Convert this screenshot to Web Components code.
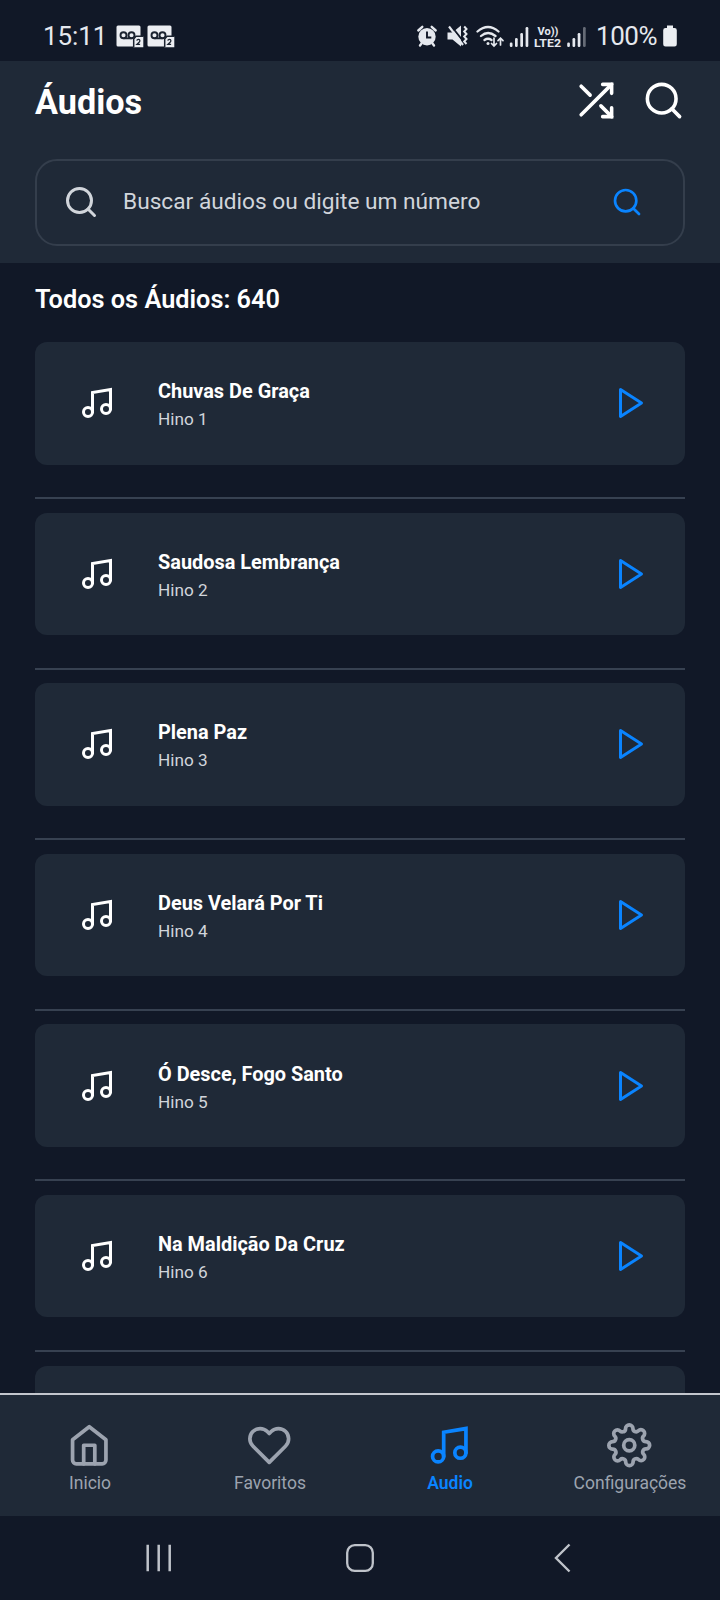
<!DOCTYPE html>
<html lang="pt-BR">
<head>
<meta charset="utf-8">
<title>Áudios</title>
<style>
html,body{margin:0;background:#111827}
body{font-family:Roboto,"Liberation Sans",sans-serif;width:720px;height:1600px;overflow:hidden}
</style>
</head>
<body>
<audio-app></audio-app>
<script>
const ICONS={
shuffle:'<polyline points="16 3 21 3 21 8"/><line x1="4" y1="20" x2="21" y2="3"/><polyline points="21 16 21 21 16 21"/><line x1="15" y1="15" x2="21" y2="21"/><line x1="4" y1="4" x2="9" y2="9"/>',
search:'<circle cx="11" cy="11" r="8"/><line x1="21" y1="21" x2="16.65" y2="16.65"/>',
music:'<path d="M9 18V5l12-2v13"/><circle cx="6" cy="18" r="3"/><circle cx="18" cy="16" r="3"/>',
play:'<polygon points="5 3 19 12 5 21 5 3" stroke-linejoin="round"/>',
home:'<path d="M3 9l9-7 9 7v11a2 2 0 0 1-2 2H5a2 2 0 0 1-2-2z"/><polyline points="9 22 9 12 15 12 15 22"/>',
heart:'<path d="M20.84 4.61a5.5 5.5 0 0 0-7.78 0L12 5.67l-1.06-1.06a5.5 5.5 0 0 0-7.78 7.78l1.06 1.06L12 21.23l7.78-7.78 1.06-1.06a5.5 5.5 0 0 0 0-7.78z"/>',
settings:'<circle cx="12" cy="12" r="3"/><path d="M19.4 15a1.65 1.65 0 0 0 .33 1.82l.06.06a2 2 0 0 1 0 2.83 2 2 0 0 1-2.83 0l-.06-.06a1.65 1.65 0 0 0-1.82-.33 1.65 1.65 0 0 0-1 1.51V21a2 2 0 0 1-2 2 2 2 0 0 1-2-2v-.09A1.65 1.65 0 0 0 9 19.4a1.65 1.65 0 0 0-1.82.33l-.06.06a2 2 0 0 1-2.83 0 2 2 0 0 1 0-2.83l.06-.06a1.65 1.65 0 0 0 .33-1.82 1.65 1.65 0 0 0-1.51-1H3a2 2 0 0 1-2-2 2 2 0 0 1 2-2h.09A1.65 1.65 0 0 0 4.6 9a1.65 1.65 0 0 0-.33-1.82l-.06-.06a2 2 0 0 1 0-2.83 2 2 0 0 1 2.83 0l.06.06a1.65 1.65 0 0 0 1.82.33H9a1.65 1.65 0 0 0 1-1.51V3a2 2 0 0 1 2-2 2 2 0 0 1 2 2v.09a1.65 1.65 0 0 0 1 1.51 1.65 1.65 0 0 0 1.82-.33l.06-.06a2 2 0 0 1 2.83 0 2 2 0 0 1 0 2.83l-.06.06a1.65 1.65 0 0 0-.33 1.82V9a1.65 1.65 0 0 0 1.51 1H21a2 2 0 0 1 2 2 2 2 0 0 1-2 2h-.09a1.65 1.65 0 0 0-1.51 1z"/>'
};
function define(name,html){
  customElements.define(name,class extends HTMLElement{
    constructor(){super();
      const t=document.createElement('template');
      t.innerHTML=html;
      this.attachShadow({mode:'open'}).append(t.content.cloneNode(true));
    }
  });
}
customElements.define('line-icon',class extends HTMLElement{
  connectedCallback(){
    if(this.shadowRoot)return;
    const s=this.getAttribute('size');
    this.attachShadow({mode:'open'}).innerHTML=`<style>:host{display:block;flex:none;width:${s}px;height:${s}px}svg{display:block;width:100%;height:100%}</style>
    <svg viewBox="0 0 24 24" fill="none" stroke="currentColor" stroke-width="2" stroke-linecap="round" stroke-linejoin="${this.getAttribute('join')||'round'}">${ICONS[this.getAttribute('name')]}</svg>`;
  }
});
define('status-bar',`<style>
:host{display:flex;height:61px;box-sizing:border-box;padding:22px 42px 11px 43px;align-items:center;color:#e5e8ee;background:#111827;justify-content:space-between}
div{display:flex;align-items:center}
span{font-size:26px;line-height:28px;white-space:nowrap}
svg{display:block;flex:none}
.t{letter-spacing:-.1px}
.p{letter-spacing:-.5px}
</style>
<div><span class="t">15:11</span>
<svg style="margin-left:8px" width="60" height="28" viewBox="0 0 60 28">
<g id="v"><rect x="1.5" y="3.5" width="24" height="21" rx="1.5" fill="#eceef2"/>
<g fill="none" stroke="#1b2330" stroke-width="1.9"><circle cx="8.500" cy="13.300" r="3"/><circle cx="16.500" cy="13.300" r="3"/><path d="M8.500 16.300h8"/></g>
<path d="M18.5 25.200v-8.200l2.300-2.500h7.500v10.700z" fill="#eceef2"/><path d="M18.700 25v-8l2.300-2.700h7.200" fill="none" stroke="#1b2330" stroke-width="1.500"/>
<path d="M21.8 18.700q.2-1.300 1.600-1.300 1.500 0 1.500 1.300 0 .8-1.300 2l-1.700 1.700h3.200" fill="none" stroke="#1b2330" stroke-width="1.300"/></g>
<use href="#v" x="31"/></svg></div>
<div>
<svg style="margin-right:-2px" width="182" height="28" viewBox="0 0 182 28" fill="none" stroke="#e5e8ee">
<g><circle cx="11" cy="14.700" r="8.700" fill="#e5e8ee" stroke="none"/><path d="M2.300 8.500l4-3.700M19.700 8.500l-4-3.700M5.500 21.500l-1.500 2M16.500 21.500l1.500 2" stroke-width="2.400" stroke-linecap="round"/><path d="M11 9.500v6h4.300" stroke="#111827" stroke-width="1.900"/></g>
<g><path d="M31.500 10.500h5l8.500-7v21l-8.500-7h-5z" fill="#e5e8ee" stroke="none"/><path d="M34.800 3.500l15 19" stroke="#111827" stroke-width="2"/><path d="M33 4.500L47 23" stroke-width="2.100"/><path d="M48.200 4.500l2.300 2.500-2.300 2.500 2.300 2.500-2.300 2.500 2.300 2.500-2.300 2.500 2.300 2.500" stroke-width="2"/></g>
<g stroke-width="2.300" stroke-linecap="round"><path d="M61.500 9.500q10.500-9 21 0M65 14q7-6 14.500 0M68.500 18q3.500-2.500 7 0"/><circle cx="72" cy="21.500" r="1.500" fill="#e5e8ee" stroke="none"/><path d="M78 16v8m-2.500-2.500l2.500 2.500 2.500-2.500M84.500 23v-6.500m-2.500 2.200l2.500-2.500 2.500 2.500" stroke-width="1.700"/></g>
<g fill="#e5e8ee" stroke="none"><rect x="93.800" y="20.500" width="2.700" height="4.500" rx="1.200"/><rect x="99" y="16" width="2.700" height="9" rx="1.200"/><rect x="104.300" y="11" width="2.700" height="14" rx="1.200"/><rect x="109.600" y="5" width="2.700" height="20" rx="1.200"/>
<text x="132" y="12.500" text-anchor="middle" font-family="Roboto" font-size="11" font-weight="700" textLength="21" lengthAdjust="spacingAndGlyphs">Vo))</text><text x="131.500" y="24.500" text-anchor="middle" font-family="Roboto" font-size="11.800" font-weight="700" textLength="27" lengthAdjust="spacingAndGlyphs">LTE2</text>
<rect x="151.200" y="20.500" width="2.700" height="4.500" rx="1.200"/><rect x="156.500" y="16" width="2.700" height="9" rx="1.200"/><rect x="161.700" y="11" width="2.700" height="14" rx="1.200"/><rect x="167" y="5" width="2.700" height="20" rx="1.200" opacity=".4"/></g></svg>
<span class="p">100%</span>
<svg style="margin-left:5px" width="16" height="28" viewBox="0 0 16 28" fill="#eceef2"><path d="M5 3.500h6v2.500h1.500q2.300 0 2.300 2.300v14q0 2.300-2.300 2.300h-9q-2.300 0-2.300-2.300v-14q0-2.300 2.300-2.300h1.500z"/></svg>
</div>`);
define('app-header',`<style>
:host{display:block;height:202px;box-sizing:border-box;padding:18px 35px 17px;background:#1f2937;color:#fff}
.top{display:flex;height:43px;align-items:center;gap:25.5px}
h1{margin:0;flex:1;font-size:34.200px;line-height:41px;font-weight:700;padding-top:4px}
</style><div class="top"><h1><slot></slot></h1><line-icon name="shuffle" size="43" join="miter"></line-icon><line-icon name="search" size="43"></line-icon></div>
<search-box>Buscar áudios ou digite um número</search-box>`);
define('search-box',`<style>
:host{display:flex;align-items:center;box-sizing:border-box;height:87px;margin-top:37px;border:2px solid #343e4c;border-radius:22px;padding:0 40px 0 26px;color:#d1d5db}
span{flex:1;margin-left:24px;font-size:22.700px;line-height:30px;padding-bottom:1px}
.go{color:#0a84ff}
line-icon{margin-top:-1px}
</style><line-icon name="search" size="36"></line-icon><span><slot></slot></span><line-icon class="go" name="search" size="32"></line-icon>`);
customElements.define('audio-row',class extends HTMLElement{
  connectedCallback(){
    if(this.shadowRoot)return;
    const n=this.getAttribute('number');
    this.attachShadow({mode:'open'}).innerHTML=`<style>
:host{display:block;height:170.6px;flex:none}
.card{height:122.500px;box-sizing:border-box;border-radius:12px;background:#1f2937;display:flex;align-items:center;padding:0 36px 0 43.500px;color:#fff}
.txt{flex:1;margin-left:43.500px;padding-top:5px}
b{display:block;font-size:19.900px;line-height:27px;font-weight:700}
small{display:block;font-size:17.200px;line-height:28px;color:#d1d5db}
.play{color:#0a84ff}
hr{border:0;height:2px;background:#374151;margin:32.500px 0 0}
</style><div class="card">${n?`<line-icon name="music" size="36" join="miter"></line-icon><div class="txt"><b><slot></slot></b><small>Hino ${n}</small></div><line-icon class="play" name="play" size="36"></line-icon>`:''}</div><hr>`;
  }
});
define('audio-list',`<style>
:host{display:flex;flex-direction:column;height:1130px;box-sizing:border-box;overflow:hidden;padding:0 35px;background:#111827}
h2{margin:22px 0 27px;font-size:25.300px;line-height:30px;font-weight:600;color:#fff;flex:none}
</style><h2>Todos os Áudios: 640</h2><slot></slot>`);
customElements.define('tab-item',class extends HTMLElement{
  connectedCallback(){
    if(this.shadowRoot)return;
    this.attachShadow({mode:'open'}).innerHTML=`<style>
:host{display:flex;flex-direction:column;align-items:center;color:#9ca3af;padding-top:28px;min-width:0}
:host([active]){color:#0a84ff;font-weight:600}
line-icon{margin-right:1.500px}
span{font-size:17.500px;line-height:22px;margin-top:4px;white-space:nowrap}
</style><line-icon name="${this.getAttribute('icon')}" size="44.500" join="${this.getAttribute('icon')==='music'?'miter':'round'}"></line-icon><span><slot></slot></span>`;
  }
});
define('tab-bar',`<style>
:host{display:grid;grid-template-columns:repeat(4,180px);height:123px;box-sizing:border-box;border-top:2px solid #c3c6cd;background:#1f2937}
</style><slot></slot>`);
define('system-nav',`<style>
:host{display:flex;height:84px;background:#111827;align-items:center;justify-content:space-between;padding:0 144px 1px;box-sizing:border-box}
svg{display:block}
</style>
<svg width="30" height="30" viewBox="0 0 30 30" stroke="#bfc3ca" stroke-width="2.500"><path d="M3.700 1.800v26.400M14.700 1.800v26.400M25.700 1.800v26.400"/></svg>
<svg width="30" height="30" viewBox="0 0 30 30" fill="none" stroke="#bfc3ca" stroke-width="2.300"><rect x="2.200" y="2.200" width="25.600" height="25.600" rx="7.500"/></svg>
<svg width="30" height="30" viewBox="0 0 30 30" fill="none" stroke="#bfc3ca" stroke-width="2.400"><path d="M23.500 1.500L10 15l13.500 13.500"/></svg>`);
define('audio-app',`<style>:host{display:flex;flex-direction:column;width:720px;height:1600px;overflow:hidden}:host>*{flex:none}</style>
<status-bar></status-bar><app-header>Áudios</app-header>
<audio-list>
<audio-row number="1">Chuvas De Graça</audio-row>
<audio-row number="2">Saudosa Lembrança</audio-row>
<audio-row number="3">Plena Paz</audio-row>
<audio-row number="4">Deus Velará Por Ti</audio-row>
<audio-row number="5">Ó Desce, Fogo Santo</audio-row>
<audio-row number="6">Na Maldição Da Cruz</audio-row>
<audio-row></audio-row>
</audio-list>
<tab-bar><tab-item icon="home">Inicio</tab-item><tab-item icon="heart">Favoritos</tab-item><tab-item icon="music" active>Audio</tab-item><tab-item icon="settings">Configurações</tab-item></tab-bar>
<system-nav></system-nav>`);
</script>
</body>
</html>
